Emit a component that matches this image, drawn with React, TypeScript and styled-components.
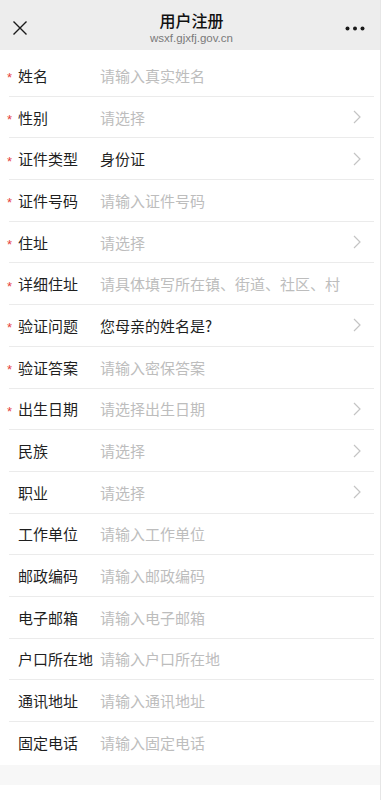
import React from "react";
import styled, { createGlobalStyle } from "styled-components";

type Field = {
  label: string;
  placeholder?: string;
  value?: string;
  required?: boolean;
  select?: boolean;
};

const fields: Field[] = [
  { label: "姓名", placeholder: "请输入真实姓名", required: true },
  { label: "性别", placeholder: "请选择", required: true, select: true },
  { label: "证件类型", value: "身份证", required: true, select: true },
  { label: "证件号码", placeholder: "请输入证件号码", required: true },
  { label: "住址", placeholder: "请选择", required: true, select: true },
  { label: "详细住址", placeholder: "请具体填写所在镇、街道、社区、村", required: true },
  { label: "验证问题", value: "您母亲的姓名是?", required: true, select: true },
  { label: "验证答案", placeholder: "请输入密保答案", required: true },
  { label: "出生日期", placeholder: "请选择出生日期", required: true, select: true },
  { label: "民族", placeholder: "请选择", select: true },
  { label: "职业", placeholder: "请选择", select: true },
  { label: "工作单位", placeholder: "请输入工作单位" },
  { label: "邮政编码", placeholder: "请输入邮政编码" },
  { label: "电子邮箱", placeholder: "请输入电子邮箱" },
  { label: "户口所在地", placeholder: "请输入户口所在地" },
  { label: "通讯地址", placeholder: "请输入通讯地址" },
  { label: "固定电话", placeholder: "请输入固定电话" },
];

const GlobalStyle = createGlobalStyle`
  html, body {
    margin: 0;
    padding: 0;
    background: #fff;
    font-family: "Noto Sans CJK SC", "Noto Sans", "Liberation Sans", sans-serif;
  }
  * { box-sizing: border-box; }
`;

const App: React.FC = () => {
  return (
    <>
      <GlobalStyle />
      <Page>
        <Header>
          <CloseIcon width="16" height="16" viewBox="0 0 16 16">
            <path d="M1.5 1.5 L14.5 14.5 M14.5 1.5 L1.5 14.5" stroke="#1a1a1a" strokeWidth="1.4" fill="none" />
          </CloseIcon>
          <TitleBox>
            <Title>用户注册</Title>
            <Url>wsxf.gjxfj.gov.cn</Url>
          </TitleBox>
          <MoreIcon width="20" height="5" viewBox="0 0 20 5">
            <circle cx="2.5" cy="2.5" r="2" fill="#1a1a1a" />
            <circle cx="10" cy="2.5" r="2" fill="#1a1a1a" />
            <circle cx="17.5" cy="2.5" r="2" fill="#1a1a1a" />
          </MoreIcon>
        </Header>
        <Form>
          {fields.map((f, i) => (
            <Row key={f.label} last={i === fields.length - 1}>
              <Star>{f.required ? "*" : ""}</Star>
              <Label>{f.label}</Label>
              <Value filled={!!f.value}>{f.value || f.placeholder}</Value>
              {f.select && (
                <Chevron width="8" height="14" viewBox="0 0 8 14">
                  <path d="M1 1 L7 7 L1 13" stroke="#c4c4c4" strokeWidth="1.2" fill="none" />
                </Chevron>
              )}
            </Row>
          ))}
        </Form>
        <Footer />
        <Bottom />
      </Page>
    </>
  );
};

const Page = styled.div`
  width: 381px;
  min-height: 800px;
  border-right: 1px solid #e6e6e6;
  background: #fff;
`;

const Header = styled.div`
  height: 50px;
  background: #ededed;
  display: flex;
  align-items: center;
  justify-content: space-between;
  padding: 0 15px 0 12px;
`;

const CloseIcon = styled.svg`
  margin-top: 6px;
  display: block;
`;

const MoreIcon = styled.svg`
  margin-top: 6px;
  display: block;
`;

const TitleBox = styled.div`
  display: flex;
  flex-direction: column;
  align-items: center;
  margin-left: 10px;
`;

const Title = styled.div`
  font-size: 16px;
  font-weight: 500;
  color: #111;
  line-height: 20px;
  margin-top: 4px;
`;

const Url = styled.div`
  font-family: "Liberation Sans", "Noto Sans", sans-serif;
  font-size: 11.5px;
  color: #7a7a7a;
  line-height: 14px;
  margin-top: 1px;
`;

const Form = styled.div`
  padding-top: 5px;
`;

const Row = styled.div<{ last?: boolean }>`
  height: 41.7px;
  display: flex;
  align-items: center;
  margin: 0 6px 0 9px;
  border-bottom: ${(p) => (p.last ? "none" : "1px solid #ebebeb")};
`;

const Star = styled.span`
  width: 9px;
  color: #e6423c;
  font-size: 13px;
  font-family: "Liberation Sans", sans-serif;
  padding-top: 5px;
  margin-left: -2px;
  margin-right: 2px;
  flex-shrink: 0;
`;

const Label = styled.span`
  width: 82px;
  font-size: 15px;
  color: #1f1f1f;
  flex-shrink: 0;
  white-space: nowrap;
`;

const Value = styled.span<{ filled?: boolean }>`
  flex: 1;
  font-size: 15px;
  color: ${(p) => (p.filled ? "#1f1f1f" : "#bdbdbd")};
  white-space: nowrap;
  overflow: hidden;
`;

const Chevron = styled.svg`
  display: block;
  margin-right: 13px;
  flex-shrink: 0;
`;

const Footer = styled.div`
  height: 20px;
  margin-top: 1px;
  background: #f7f7f7;
`;

const Bottom = styled.div`
  height: 15px;
  background: #fff;
`;

export default App;
